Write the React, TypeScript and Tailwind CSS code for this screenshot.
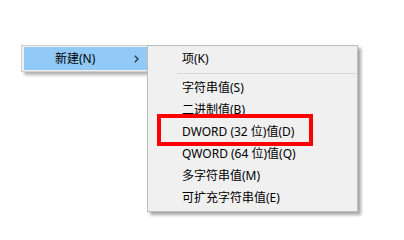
const items = [
  '字符串值(S)',
  '二进制值(B)',
  'DWORD (32 位)值(D)',
  'QWORD (64 位)值(Q)',
  '多字符串值(M)',
  '可扩充字符串值(E)',
]

export default function App() {
  return (
    <div
      className="relative h-[229px] w-[404px] overflow-hidden bg-white text-[12px] text-black"
      style={{ fontFamily: '"Noto Sans", "Noto Sans CJK SC", sans-serif' }}
    >
      {/* 父菜单 */}
      <div className="absolute left-[21px] top-[45px] h-[27px] w-[130px] border border-[#cfcfcf] bg-[#f0f0f0] p-px pl-[2px] shadow-[3px_3px_3px_0_rgba(0,0,0,0.3)]">
        <div className="flex h-[23px] w-[123px] items-center bg-[#91c9f7] pl-[31px] pr-[7px]">
          <span className="flex-1 leading-none">新建(N)</span>
          <svg width="5" height="8" viewBox="0 0 5 8" className="mr-[1px]">
            <path d="M0.8 0.8 L4 4 L0.8 7.2" fill="none" stroke="#333" strokeWidth="1.3" />
          </svg>
        </div>
      </div>

      {/* 子菜单 */}
      <div className="absolute left-[147px] top-[45px] flex w-[211px] flex-col border border-[#bdbdbd] bg-[#f0f0f0] pb-[2px] pt-[2px] shadow-[3px_3px_3px_0_rgba(0,0,0,0.35)]">
        <div className="flex h-[22px] items-center pl-[34px] leading-none">项(K)</div>
        <div className="flex h-[7px] items-center pl-[29px] pr-[1px]">
          <div className="h-px w-full bg-[#d7d7d7]" />
        </div>
        {items.map((t) => (
          <div key={t} className="flex h-[22px] items-center pl-[34px] leading-none">
            {t}
          </div>
        ))}
      </div>

      {/* 红框 */}
      <div className="absolute left-[157px] top-[114px] h-[32px] w-[156px] border-4 border-[#ff0000]" />
    </div>
  )
}
